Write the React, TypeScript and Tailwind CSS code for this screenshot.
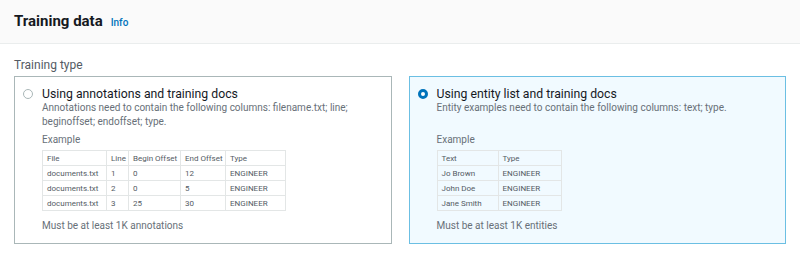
import React from "react";

const font = { fontFamily: 'Roboto, "Noto Sans", sans-serif' };

function Table({ head, rows, widths, tw }: { head: string[]; rows: string[][]; widths: string[]; tw: string }) {
  return (
    <table className={`${tw} border-collapse table-fixed text-[8px] leading-none text-[#545b64] whitespace-nowrap`}>
      <tbody>
        <tr>
          {head.map((h, i) => (
            <td key={i} className={`${widths[i]} border border-[#e3e6e6] h-[15px] px-[4px] pt-[1px] overflow-hidden`}>
              {h}
            </td>
          ))}
        </tr>
        {rows.map((r, ri) => (
          <tr key={ri}>
            {r.map((c, ci) => (
              <td key={ci} className="border border-[#e3e6e6] h-[15px] px-[4px] pt-[1px] overflow-hidden">
                {c}
              </td>
            ))}
          </tr>
        ))}
      </tbody>
    </table>
  );
}

export default function App() {
  return (
    <div style={font} className="w-[800px] h-[258px] bg-white text-[#16191f]">
      <div className="h-[44px] bg-[#fafafa] border-b border-[#eaeded] flex items-baseline pt-[11px] px-[14px] gap-[8px]">
        <span className="text-[15px] font-bold leading-[20px]">Training data</span>
        <span className="text-[10px] font-medium text-[#0073bb] leading-[20px]">Info</span>
      </div>
      <div className="px-[14px] pt-[14px]">
        <div className="text-[12px] leading-[14px] text-[#545b64] mb-[4px]">Training type</div>
        <div className="flex gap-[17px]">
          <div className="w-[379px] h-[168px] border border-[#aab7b8] pl-[8px] pr-[10px] pt-[10px]">
            <div className="flex gap-[9px]">
              <div className="w-[10px] h-[10px] rounded-full border border-[#aab7b8] bg-white mt-[2px] shrink-0" />
              <div>
                <div className="text-[12.25px] leading-[14px]">Using annotations and training docs</div>
                <div className="text-[10px] leading-[14px] text-[#687078] min-h-[28px] w-[320px]">
                  Annotations need to contain the following columns: filename.txt; line; beginoffset; endoffset; type.
                </div>
                <div className="text-[10px] leading-[12px] text-[#687078] mt-[5px] mb-[4px]">Example</div>
                <Table
                  tw="w-[243px]"
                  head={["File", "Line", "Begin Offset", "End Offset", "Type"]}
                  rows={[
                    ["documents.txt", "1", "0", "12", "ENGINEER"],
                    ["documents.txt", "2", "0", "5", "ENGINEER"],
                    ["documents.txt", "3", "25", "30", "ENGINEER"],
                  ]}
                  widths={["w-[64px]", "w-[22px]", "w-[52px]", "w-[45px]", "w-[60px]"]}
                />
                <div className="text-[10px] leading-[12px] text-[#687078] mt-[9px]">Must be at least 1K annotations</div>
              </div>
            </div>
          </div>
          <div className="w-[379px] h-[168px] border border-[#6bbfe3] bg-[#f1faff] pl-[8px] pr-[10px] pt-[10px]">
            <div className="flex gap-[9px]">
              <div className="w-[10px] h-[10px] rounded-full border-[3px] border-[#0073bb] bg-white mt-[2px] shrink-0" />
              <div>
                <div className="text-[12.25px] leading-[14px]">Using entity list and training docs</div>
                <div className="text-[10px] leading-[14px] text-[#687078] min-h-[28px]">
                  Entity examples need to contain the following columns: text; type.
                </div>
                <div className="text-[10px] leading-[12px] text-[#687078] mt-[5px] mb-[4px]">Example</div>
                <Table
                  tw="w-[124px]"
                  head={["Text", "Type"]}
                  rows={[
                    ["Jo Brown", "ENGINEER"],
                    ["John Doe", "ENGINEER"],
                    ["Jane Smith", "ENGINEER"],
                  ]}
                  widths={["w-[61px]", "w-[63px]"]}
                />
                <div className="text-[10px] leading-[12px] text-[#687078] mt-[9px]">Must be at least 1K entities</div>
              </div>
            </div>
          </div>
        </div>
      </div>
    </div>
  );
}
